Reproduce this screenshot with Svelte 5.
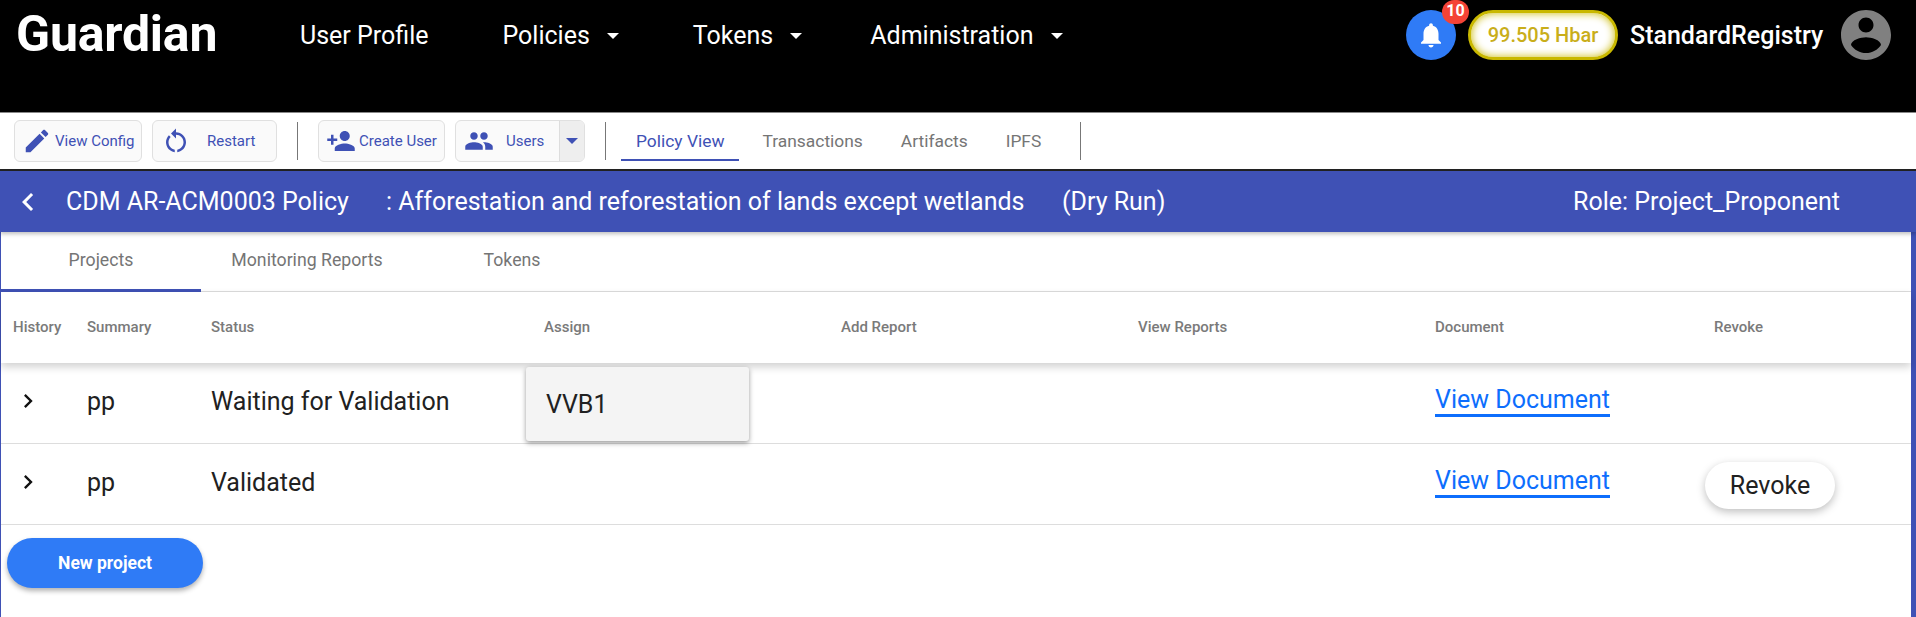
<script>
  const icons = {
    edit: "M3 17.25V21h3.75L17.81 9.94l-3.75-3.75L3 17.25zM20.71 7.04c.39-.39.39-1.02 0-1.41l-2.34-2.34c-.39-.39-1.02-.39-1.41 0l-1.83 1.83 3.75 3.75 1.83-1.83z",
    restart: "M12 5V2L8 6l4 4V7c3.31 0 6 2.69 6 6 0 2.97-2.17 5.43-5 5.91v2.02c3.95-.49 7-3.85 7-7.93 0-4.42-3.58-8-8-8zm-6 8c0-1.65.67-3.15 1.76-4.24L6.34 7.34C4.9 8.79 4 10.79 4 13c0 4.08 3.05 7.44 7 7.93v-2.02c-2.83-.48-5-2.94-5-5.91z",
    add: "M15 12c2.21 0 4-1.79 4-4s-1.79-4-4-4-4 1.79-4 4 1.79 4 4 4zm-9-2V7H4v3H1v2h3v3h2v-3h3v-2H6zm9 4c-2.67 0-8 1.34-8 4v2h16v-2c0-2.66-5.33-4-8-4z",
    people: "M16 11c1.66 0 2.99-1.34 2.99-3S17.66 5 16 5c-1.66 0-3 1.34-3 3s1.34 3 3 3zm-8 0c1.66 0 2.99-1.34 2.99-3S9.66 5 8 5C6.34 5 5 6.34 5 8s1.34 3 3 3zm0 2c-2.33 0-7 1.17-7 3.5V19h14v-2.5c0-2.33-4.67-3.5-7-3.5zm8 0c-.29 0-.62.02-.97.05 1.16.84 1.97 1.97 1.97 3.45V19h6v-2.5c0-2.33-4.67-3.5-7-3.5z",
    bell: "M12 22c1.1 0 2-.9 2-2h-4c0 1.1.9 2 2 2zm6-6v-5c0-3.07-1.63-5.64-4.5-6.32V4c0-.83-.67-1.5-1.5-1.5s-1.5.67-1.5 1.5v.68C7.64 5.36 6 7.92 6 11v5l-2 2v1h16v-1l-2-2z",
    account: "M12 2C6.48 2 2 6.48 2 12s4.48 10 10 10 10-4.48 10-10S17.52 2 12 2zm0 3c1.66 0 3 1.34 3 3s-1.34 3-3 3-3-1.34-3-3 1.34-3 3-3zm0 14.2c-2.5 0-4.71-1.28-6-3.22.03-1.99 4-3.08 6-3.08 1.99 0 5.97 1.09 6 3.08-1.29 1.94-3.5 3.22-6 3.22z",
    chevron: "M10 6L8.59 7.41 13.17 12l-4.58 4.59L10 18l6-6z",
    back: "M15.41 7.41L14 6l-6 6 6 6 1.41-1.41L10.83 12z"
  };
  const heads = ["History", "Summary", "Status", "Assign", "Add Report", "View Reports", "Document", "Revoke"];
  const rows = [
    { status: "Waiting for Validation", assign: "VVB1", revoke: false },
    { status: "Validated", assign: "", revoke: true }
  ];
</script>

<header class="topbar">
  <div class="logo">Guardian</div>
  <nav class="mainnav">
    <span class="navitem">User Profile</span>
    <span class="navitem">Policies<i class="caret"></i></span>
    <span class="navitem">Tokens<i class="caret"></i></span>
    <span class="navitem admin">Administration<i class="caret"></i></span>
  </nav>
  <div class="userarea">
    <div class="bell">
      <svg viewBox="0 0 24 24" class="bellicon"><path d={icons.bell} /></svg>
      <span class="badge">10</span>
    </div>
    <div class="balance">99.505 Hbar</div>
    <div class="username">StandardRegistry</div>
    <svg viewBox="2 2 20 20" class="avatar"><path d={icons.account} /></svg>
  </div>
</header>

<section class="toolbar">
  <button class="tool config"><svg viewBox="0 0 24 24" class="ic ic-edit"><path d={icons.edit} /></svg>View Config</button>
  <button class="tool restart"><svg viewBox="0 0 24 24" class="ic"><path d={icons.restart} /></svg><span>Restart</span></button>
  <div class="sep first"></div>
  <button class="tool create"><svg viewBox="0 0 24 24" class="ic ic-add"><path d={icons.add} /></svg>Create User</button>
  <div class="tool users">
    <span class="usermain"><svg viewBox="0 0 24 24" class="ic ic-people"><path d={icons.people} /></svg><span>Users</span></span>
    <span class="userdrop"><i class="caret blue"></i></span>
  </div>
  <div class="sep second"></div>
  <div class="viewtabs">
    <span class="vtab active">Policy View</span>
    <span class="vtab">Transactions</span>
    <span class="vtab">Artifacts</span>
    <span class="vtab">IPFS</span>
  </div>
  <div class="sep third"></div>
</section>

<section class="policybar">
  <svg viewBox="0 0 24 24" class="backic"><path d={icons.back} /></svg>
  <span class="pname">CDM AR-ACM0003 Policy</span>
  <span class="pdesc">: Afforestation and reforestation of lands except wetlands</span>
  <span class="pmode">(Dry Run)</span>
  <span class="prole">Role: Project_Proponent</span>
</section>

<main class="content">
  <div class="tabs">
    <span class="tab t1 active">Projects</span>
    <span class="tab t2">Monitoring Reports</span>
    <span class="tab t3">Tokens</span>
  </div>
  <div class="grid head">
    {#each heads as h}<div class="hcell">{h}</div>{/each}
  </div>
  {#each rows as r}
    <div class="grid row">
      <div class="cell"><svg viewBox="0 0 24 24" class="chev"><path d={icons.chevron} /></svg></div>
      <div class="cell">pp</div>
      <div class="cell">{r.status}</div>
      <div class="cell">{#if r.assign}<div class="assign">{r.assign}</div>{/if}</div>
      <div class="cell"></div>
      <div class="cell"></div>
      <div class="cell"><a class="doc" href="#top">View Document</a></div>
      <div class="cell">{#if r.revoke}<button class="revoke">Revoke</button>{/if}</div>
    </div>
  {/each}
  <button class="newproject">New project</button>
</main>

<style>
  :global(body) { margin: 0; background: #fff; font-family: Roboto, "Liberation Sans", sans-serif; overflow: hidden; }
  i { font-style: normal; }
  button { font-family: inherit; }

  .topbar { height: 112px; background: #000; border-bottom: 1px solid #888; display: flex; align-items: flex-start; color: #fff; box-sizing: content-box; }
  .logo { font-size: 50px; font-weight: 700; margin: 3px 0 0 16px; width: 284px; line-height: 62px; letter-spacing: -.2px; }
  .mainnav { display: flex; gap: 74px; margin-top: 20px; }
  .navitem { font-size: 25px; line-height: 32px; display: flex; align-items: center; }
  .admin { margin-left: -6px; }
  .caret { display: inline-block; border: 6.5px solid transparent; border-top-color: #fff; border-bottom: 0; margin-left: 17px; }
  .caret.blue { border-top-color: #3f51b5; margin: 0; }
  .userarea { margin-left: auto; display: flex; align-items: center; margin-top: 10px; padding-right: 25px; }
  .bell { width: 50px; height: 50px; border-radius: 50%; background: #2f7bf6; position: relative; display: flex; align-items: center; justify-content: center; margin-right: 12px; }
  .bellicon { width: 30px; height: 30px; fill: #fff; }
  .badge { position: absolute; left: 36px; top: -10px; width: 27px; height: 24px; border-radius: 12px; background: #f44336; font-size: 16px; font-weight: 700; line-height: 21px; text-align: center; }
  .balance { width: 150px; height: 50px; box-sizing: border-box; border: 3px solid #c9b800; border-radius: 25px; background: #fff; box-shadow: inset 0 0 8px #c9b800; color: #c9ae1a; font-size: 20px; font-weight: 500; line-height: 44px; text-align: center; margin-right: 12px; }
  .username { font-size: 25px; font-weight: 500; width: 211px; line-height: 32px; margin-top: 2px; }
  .avatar { width: 50px; height: 50px; fill: #808080; }

  .toolbar { height: 56px; background: #fff; border-bottom: 2px solid #222; box-sizing: content-box; display: flex; align-items: center; padding-left: 14px; color: #3f51b5; }
  .tool { height: 42px; box-sizing: border-box; border: 1px solid #e0e0e0; border-radius: 6px; background: #fafafa; color: #3f51b5; font-size: 15px; display: flex; align-items: center; padding: 0; margin-right: 10px; }
  .ic { fill: #3f51b5; width: 24px; height: 24px; flex: none; }
  .config { width: 128px; padding-left: 8px; gap: 3px; }
  .ic-edit { width: 30px; height: 30px; margin-left: -1px; }
  .restart { width: 125px; padding-left: 8px; }
  .restart .ic { width: 30px; height: 30px; }
  .restart span { margin-left: 16px; }
  .create { width: 127px; padding-left: 8px; gap: 3px; }
  .ic-add { width: 30px; height: 30px; margin-left: -1px; }
  .users { width: 130px; overflow: hidden; margin-right: 0; }
  .usermain { width: 105px; display: flex; align-items: center; padding-left: 8px; box-sizing: border-box; }
  .ic-people { width: 30px; height: 30px; }
  .usermain span { margin-left: 12px; }
  .userdrop { width: 24px; height: 100%; background: #eee; border-left: 1px solid #ddd; display: flex; align-items: center; justify-content: center; }
  .sep { width: 1px; height: 38px; background: #777; flex: none; }
  .sep.first { margin: 0 20px 0 10px; }
  .sep.second { margin: 0 15px 0 20px; }
  .sep.third { margin-left: 39px; }
  .viewtabs { display: flex; align-self: stretch; padding-top: 9px; box-sizing: border-box; }
  .vtab { font-size: 17.4px; color: #757575; line-height: 22px; margin-right: 38px; padding-top: 8px; height: 37px; box-sizing: border-box; }
  .vtab.active { color: #3f51b5; padding: 8px 15px 0; margin-right: 23px; border-bottom: 2px solid #3f51b5; height: 39px; }
  .vtab:last-child { margin-right: 0; }

  .policybar { height: 61px; background: #3f51b5; color: #fff; display: flex; align-items: center; font-size: 25px; box-shadow: 0 2px 4px rgba(0,0,0,.25); position: relative; z-index: 2; }
  .backic { width: 36px; height: 36px; fill: #fff; margin-left: 10px; flex: none; }
  .pname { margin-left: 20px; width: 320px; }
  .pdesc { width: 676px; flex: none; }
  .pmode { flex: none; }
  .prole { margin-left: auto; padding-right: 76px; }

  .content { position: relative; height: 385px; box-sizing: border-box; border-left: 1px solid #3f51b5; border-right: 5px solid #3f51b5; }
  .tabs { height: 60px; border-bottom: 1px solid #ddd; display: flex; box-sizing: border-box; }
  .tab { font-size: 17.7px; color: #757575; line-height: 56px; text-align: center; box-sizing: border-box; }
  .t1 { width: 200px; border-bottom: 3px solid #3f51b5; height: 60px; }
  .t2 { width: 208px; margin-left: 2px; }
  .t3 { width: 112px; margin-left: 45px; }
  .grid { display: grid; grid-template-columns: 74px 124px 333px 297px 297px 297px 279px 1fr; padding-left: 12px; }
  .head { height: 71px; align-items: center; box-shadow: 0 4px 8px rgba(0,0,0,.18); position: relative; background: #fff; box-sizing: border-box; padding-bottom: 2px; }
  .hcell { font-size: 15px; font-weight: 500; color: #7a7a7a; }
  .row { height: 81px; border-bottom: 1px solid #ddd; box-sizing: border-box; align-items: center; font-size: 25px; color: #212121; padding-bottom: 4px; }
  .cell { position: relative; }
  .chev { width: 28px; height: 28px; display: block; margin-left: 1px; fill: #111; }
  .assign { position: absolute; z-index: 3; left: -18px; top: -34px; width: 223px; height: 74px; box-sizing: border-box; background: #f4f4f4; border-radius: 3px; box-shadow: 0 2px 5px rgba(0,0,0,.4); padding: 20px; line-height: 36px; }
  .doc { color: #0d6efd; text-decoration: none; border-bottom: 3px solid #0d6efd; line-height: 28px; display: inline-block; height: 28px; }
  .revoke { position: absolute; left: -9px; top: -20px; width: 130px; height: 47px; border: 0; border-radius: 24px; background: #fff; box-shadow: 0 3px 8px rgba(0,0,0,.25); font-size: 25px; color: #212121; padding: 0; }
  .newproject { position: absolute; left: 6px; top: 306px; width: 196px; height: 50px; border: 0; border-radius: 25px; background: #2f7bf6; color: #fff; font-size: 17.5px; font-weight: 700; box-shadow: 0 3px 5px rgba(0,0,0,.3); }
</style>
